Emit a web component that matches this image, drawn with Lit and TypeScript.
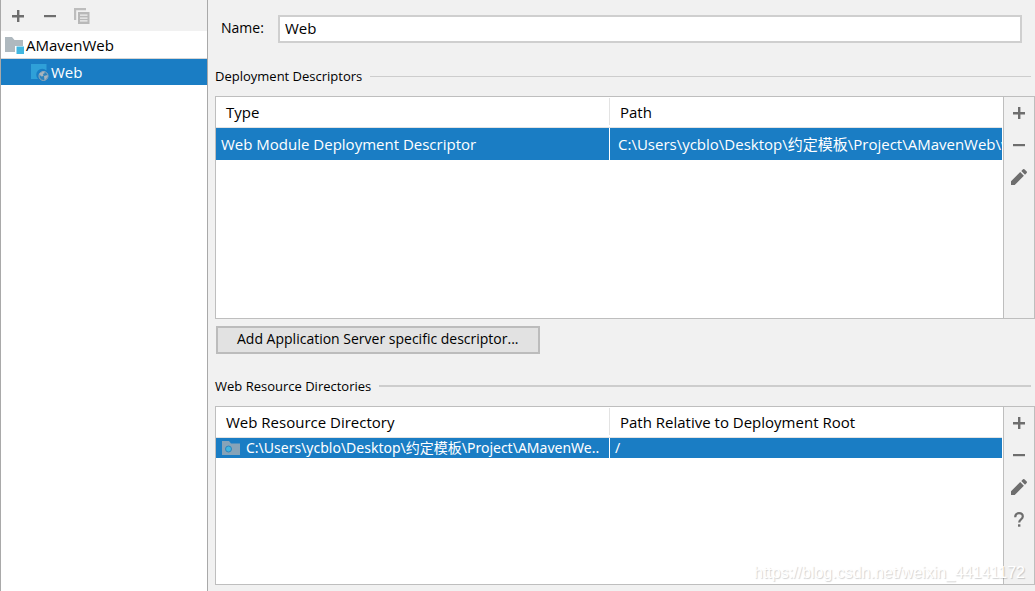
import { LitElement, html, css, nothing, type TemplateResult } from "lit";
import { customElement, property } from "lit/decorators.js";
import { classMap } from "lit/directives/class-map.js";

const icons: Record<string, TemplateResult> = {
  add: html`<svg width="16" height="16" viewBox="0 0 16 16" aria-hidden="true"><path d="M7 2h2.400v5H14v2.400H9.400V14H7V9.400H2V7h5z" fill="#6e6e6e"/></svg>`,
  remove: html`<svg width="16" height="16" viewBox="0 0 16 16" aria-hidden="true"><path d="M2 7h12v2.200H2z" fill="#6e6e6e"/></svg>`,
  copy: html`<svg width="16" height="16" viewBox="0 0 16 16" aria-hidden="true"><path d="M0 0h12v2.200H2.200V12H0z" fill="#bdbdbd"/><path fill-rule="evenodd" d="M4 4h11.500v12H4zM6 6.500v1.300h7.500V6.500zM6 9.400v1.300h7.500V9.400zM6 12.300v1.300h7.500v-1.300z" fill="#b8b8b8"/></svg>`,
  edit: html`<svg width="18" height="18" viewBox="0 0 18 18" aria-hidden="true"><path d="M1 13.300 10.200 4.100 13.900 7.800 4.700 17H1zM11.300 3 13 1.300Q13.700.700 14.400 1.300L16.700 3.600Q17.300 4.300 16.700 5L15 6.700z" fill="#6e6e6e"/></svg>`,
  help: html`<svg width="16" height="16" viewBox="0 0 16 16" aria-hidden="true"><path d="M4.200 6.200Q4.200 2.200 8 2.200T11.800 5.600Q11.800 7.100 9.800 8.600 8.200 9.800 8.200 11.600" fill="none" stroke="#6e6e6e" stroke-width="2.200"/><path d="M7 13.300h2.400v2.400H7z" fill="#6e6e6e"/></svg>`,
  module: html`<svg width="20" height="18" viewBox="0 0 20 18" aria-hidden="true"><path d="M0 1h7l2.500 3H18v6h-8v6H0z" fill="#afb9bf"/><path d="M11.500 10.500H19V18h-7.500z" fill="#40b6e0"/></svg>`,
  web: html`<svg width="18" height="18" viewBox="0 0 18 18" aria-hidden="true"><path d="M0 1h15.500v6.500A6 6 0 0 0 7 16H0z" fill="#2fa0d8"/><circle cx="12.500" cy="13" r="4.500" fill="#2d83bd" stroke="#9aa9b5" stroke-width="1"/><path d="M9 10 12.500 8.500l1.500 1.500-2 1 .5 2-2 .5L8.300 11.500zM13 13l3.500-1 .2 1.500-2 3-1.200.5z" fill="#a8b4bd"/></svg>`,
  folder: html`<svg width="18" height="14" viewBox="0 0 18 14" aria-hidden="true"><path d="M0 0h7l2 2.500h9V14H0z" fill="#86a3b8"/><circle cx="6.500" cy="8" r="3" fill="#40b6e0" stroke="#2d83bd" stroke-width="1"/></svg>`,
};

const shared = css`
  *, *::before, *::after { box-sizing: border-box; }
  button { font: inherit; color: inherit; margin: 0; }
  .tool {
    display: flex;
    align-items: center;
    justify-content: center;
    width: 32px;
    height: 32px;
    padding: 0;
    border: 0;
    background: none;
  }
`;

interface Tool { icon: string; label: string; }
interface Cell { text: string; icon?: string; }

@customElement("data-panel")
export class DataPanel extends LitElement {
  @property({ attribute: false }) columns: string[] = [];
  @property({ attribute: false }) row: Cell[] = [];
  @property({ attribute: false }) tools: Tool[] = [];
  @property({ type: Boolean }) compact = false;

  static styles = [shared, css`
    :host {
      display: flex;
      min-height: 0;
      border: 1px solid #bebebe;
      background: #fff;
    }
    .grid { flex: 1; min-width: 0; padding-right: 1px; }
    table { width: 100%; table-layout: fixed; border-spacing: 0; }
    th, td {
      padding: 0;
      font-weight: 400;
      text-align: left;
      white-space: nowrap;
      overflow: hidden;
    }
    th { height: 31px; border-bottom: 1px solid #e3e3e3; padding-left: 10px; }
    th + th { padding-left: 11px; background: linear-gradient(#e3e3e3, #e3e3e3) 0 1px / 1px 27px no-repeat; }
    td { height: 32px; padding-left: 5px; background: #1a7dc4; color: #fff; }
    td + td { padding-left: 8px; border-left: 1px solid #fff; }
    .compact td { height: 20px; font: 14px/20px "Noto Sans", "Noto Sans CJK SC", sans-serif; padding-left: 6px; }
    .compact td + td { padding-left: 5px; }
    .cell { display: flex; align-items: center; gap: 6px; }
    .cell svg { flex: none; }
    .tools {
      display: flex;
      flex-direction: column;
      width: 31px;
      border-left: 1px solid #bebebe;
      background: #f1f1f1;
    }
    .tools .tool { width: 30px; }
  `];

  render() {
    return html`
      <div class="grid">
        <table class=${classMap({ compact: this.compact })}>
          <thead><tr>${this.columns.map((c) => html`<th scope="col">${c}</th>`)}</tr></thead>
          <tbody><tr>${this.row.map((c) => html`<td><div class="cell">${c.icon ? icons[c.icon] : nothing}<span>${c.text}</span></div></td>`)}</tr></tbody>
        </table>
      </div>
      <div class="tools">
        ${this.tools.map((t) => html`<button class="tool" aria-label=${t.label}>${icons[t.icon]}</button>`)}
      </div>`;
  }
}

@customElement("app-root")
export class AppRoot extends LitElement {
  static styles = [shared, css`
    :host {
      display: flex;
      height: 100vh;
      background: #f1f1f1;
      color: #000;
      font: 15px/20px "Open Sans", "Noto Sans CJK SC", sans-serif;
      position: relative;
      overflow: hidden;
    }
    .side {
      flex: none;
      width: 208px;
      border: solid #a9a9a9;
      border-width: 0 1px;
      background: #fff;
    }
    .bar { display: flex; height: 31px; padding-left: 1px; background: #f1f1f1; }
    .tree { list-style: none; margin: 0; padding: 0; }
    .node { display: flex; align-items: center; height: 28px; padding-left: 4px; gap: 1px; border-bottom: 1px solid #d5d5d5; }
    .node.selected { height: 26px; padding: 0 0 1px 30px; gap: 2px; background: #1a7dc4; color: #fff; border: 0; }
    .main { flex: 1; min-width: 0; display: flex; flex-direction: column; padding: 15px 0 6px 7px; }
    .name { display: flex; align-items: center; padding: 0 13px 0 6px; }
    .name label { width: 57px; padding-bottom: 2px; font-size: 14px; }
    .name input {
      flex: 1;
      min-width: 0;
      height: 28px;
      padding: 0 5px 2px;
      border: 2px solid #cfcfcf;
      border-radius: 0;
      background: #fff;
      color: #000;
      font: inherit;
      outline: none;
    }
    .title {
      display: flex;
      align-items: center;
      gap: 8px;
      margin: 23px 4px 10px 0;
      font: inherit;
      font-size: 13px;
    }
    .title::after { content: ""; flex: 1; height: 1px; background: #cdcdcd; }
    .title.second::after { height: 2px; }
    .first-panel { flex: 223 1 0; }
    .second-panel { flex: 179 1 0; }
    .add {
      align-self: flex-start;
      height: 28px;
      margin: 7px 0 0 1px;
      padding: 0 19px 2px;
      border: 2px solid #bcbcbc;
      background: #e2e2e2;
      font-size: 14px;
    }
    .title.second { margin-top: 22px; }
    .mark {
      position: absolute;
      right: 10px;
      bottom: 8px;
      color: #fff;
      font: 16px/20px "Liberation Sans", sans-serif;
      text-shadow: 1px 1px 1px rgba(0, 0, 0, 0.18);
      pointer-events: none;
    }
  `];

  private tools: Tool[] = [
    { icon: "add", label: "Add" },
    { icon: "remove", label: "Remove" },
    { icon: "edit", label: "Edit" },
  ];

  render() {
    return html`
      <nav class="side">
        <div class="bar">
          <button class="tool" aria-label="Add">${icons.add}</button>
          <button class="tool" aria-label="Remove">${icons.remove}</button>
          <button class="tool" aria-label="Copy" disabled>${icons.copy}</button>
        </div>
        <ul class="tree">
          <li class="node">${icons.module}<span>AMavenWeb</span></li>
          <li class="node selected">${icons.web}<span>Web</span></li>
        </ul>
      </nav>
      <main class="main">
        <div class="name"><label for="name">Name:</label><input id="name" type="text" value="Web"></div>
        <h2 class="title">Deployment Descriptors</h2>
        <data-panel class="first-panel"
          .columns=${["Type", "Path"]}
          .row=${[
            { text: "Web Module Deployment Descriptor" },
            { text: "C:\\Users\\ycblo\\Desktop\\约定模板\\Project\\AMavenWeb\\web\\WEB-INF\\web.xml" },
          ]}
          .tools=${this.tools}></data-panel>
        <button class="add">Add Application Server specific descriptor...</button>
        <h2 class="title second">Web Resource Directories</h2>
        <data-panel class="second-panel" compact
          .columns=${["Web Resource Directory", "Path Relative to Deployment Root"]}
          .row=${[
            { text: "C:\\Users\\ycblo\\Desktop\\约定模板\\Project\\AMavenWe..", icon: "folder" },
            { text: "/" },
          ]}
          .tools=${[...this.tools, { icon: "help", label: "Help" }]}></data-panel>
      </main>
      <span class="mark">https://blog.csdn.net/weixin_44141172</span>`;
  }
}
